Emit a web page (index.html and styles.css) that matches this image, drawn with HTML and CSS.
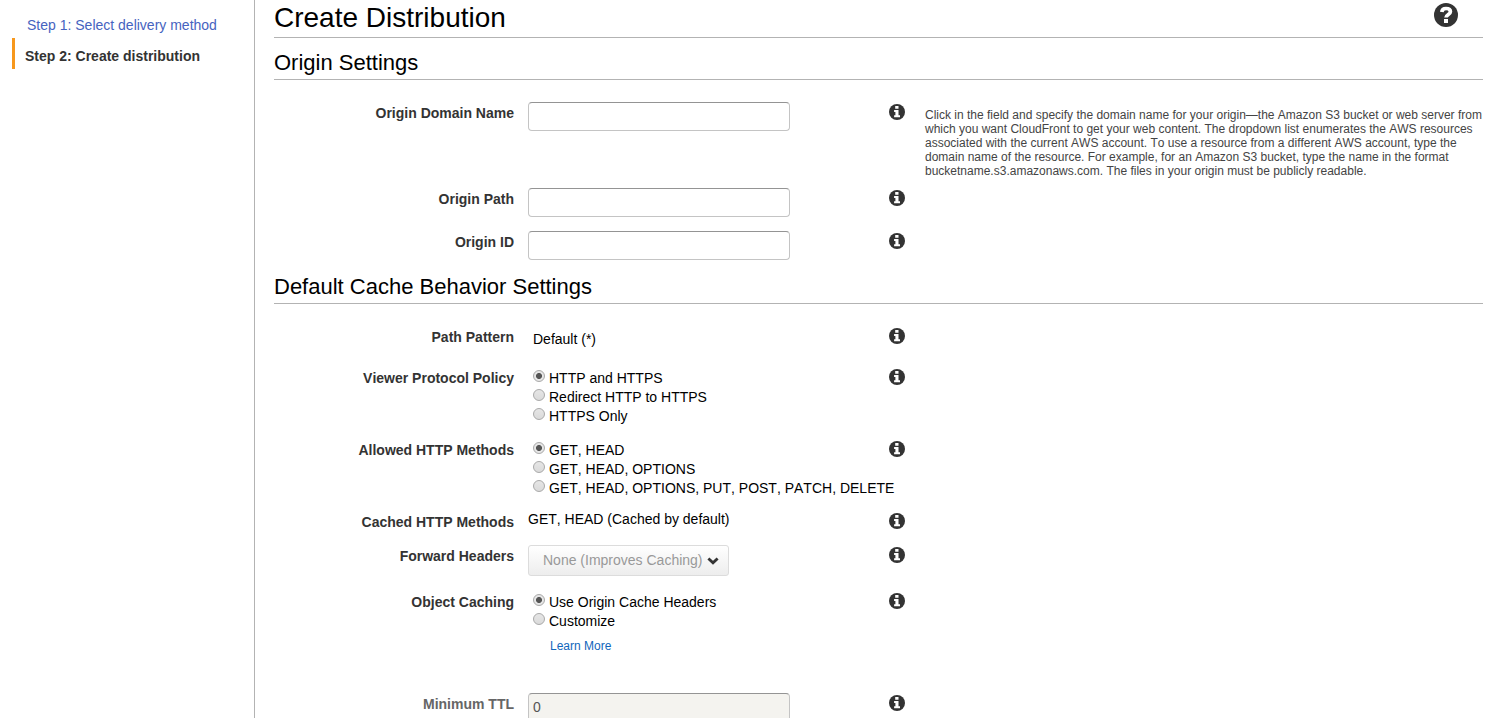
FILE: index.html
```
<!DOCTYPE html>
<html lang="en">
<head>
<meta charset="utf-8">
<title>Create Distribution</title>
<link rel="stylesheet" href="styles.css">
</head>
<body>
<svg class="sprite" aria-hidden="true">
  <symbol id="info" viewBox="0 0 16 16">
    <circle cx="8" cy="8" r="8" fill="#333"/>
    <path fill="#fff" d="M6.200 2h3.300v2.700H6.200zM5.100 6h4.400v5.300H11V13.300H5.100v-2h1.300V8H5.100z"/>
  </symbol>
</svg>
<div class="page">
  <nav class="steps">
    <a class="step" href="#">Step 1: Select delivery method</a>
    <span class="step current">Step 2: Create distribution</span>
  </nav>
  <main class="content">
    <header class="title">
      <h1>Create Distribution</h1>
      <svg class="help-icon" viewBox="0 0 24 24"><circle cx="12" cy="12" r="12" fill="#333"/><path d="M7.800 9C8 6.500 9.600 5.500 12 5.500c2.600 0 4.400 1.100 4.400 3.200 0 2.700-4.400 2.800-4.400 5.900" fill="none" stroke="#fff" stroke-width="3.700"/><path d="M10 16h4v4h-4z" fill="#fff"/></svg>
    </header>

    <h2>Origin Settings</h2>
    <section class="rows origin">
      <div class="row tall">
        <label class="name">Origin Domain Name</label>
        <div class="field"><input class="text" type="text"></div>
        <svg class="info"><use href="#info"/></svg>
        <p class="hint">Click in the field and specify the domain name for your origin—the Amazon S3 bucket or web server from<br>which you want CloudFront to get your web content. The dropdown list enumerates the AWS resources<br>associated with the current AWS account. To use a resource from a different AWS account, type the<br>domain name of the resource. For example, for an Amazon S3 bucket, type the name in the format<br>bucketname.s3.amazonaws.com. The files in your origin must be publicly readable.</p>
      </div>
      <div class="row input-row">
        <label class="name">Origin Path</label>
        <div class="field"><input class="text" type="text"></div>
        <svg class="info"><use href="#info"/></svg>
      </div>
      <div class="row input-row">
        <label class="name">Origin ID</label>
        <div class="field"><input class="text" type="text"></div>
        <svg class="info"><use href="#info"/></svg>
      </div>
    </section>

    <h2>Default Cache Behavior Settings</h2>
    <section class="rows">
      <div class="row pattern">
        <span class="name">Path Pattern</span>
        <div class="field inset">Default (*)</div>
        <svg class="info"><use href="#info"/></svg>
      </div>
      <div class="row choices">
        <span class="name">Viewer Protocol Policy</span>
        <div class="field options">
          <label class="option"><i class="radio on"></i>HTTP and HTTPS</label>
          <label class="option"><i class="radio"></i>Redirect HTTP to HTTPS</label>
          <label class="option"><i class="radio"></i>HTTPS Only</label>
        </div>
        <svg class="info"><use href="#info"/></svg>
      </div>
      <div class="row choices">
        <span class="name">Allowed HTTP Methods</span>
        <div class="field options">
          <label class="option"><i class="radio on"></i>GET, HEAD</label>
          <label class="option"><i class="radio"></i>GET, HEAD, OPTIONS</label>
          <label class="option"><i class="radio"></i>GET, HEAD, OPTIONS, PUT, POST, PATCH, DELETE</label>
        </div>
        <svg class="info"><use href="#info"/></svg>
      </div>
      <div class="row cached">
        <span class="name">Cached HTTP Methods</span>
        <div class="field">GET, HEAD (Cached by default)</div>
        <svg class="info"><use href="#info"/></svg>
      </div>
      <div class="row headers">
        <span class="name">Forward Headers</span>
        <div class="field"><button class="select" disabled>None (Improves Caching)<svg class="chevron" viewBox="0 0 12 8"><path d="M1.400 1.500 6 5.700l4.600-4.200" fill="none" stroke="#333" stroke-width="2.900"/></svg></button></div>
        <svg class="info"><use href="#info"/></svg>
      </div>
      <div class="row caching">
        <span class="name">Object Caching</span>
        <div class="field options">
          <label class="option"><i class="radio on"></i>Use Origin Cache Headers</label>
          <label class="option"><i class="radio"></i>Customize</label>
          <a class="learn" href="#">Learn More</a>
        </div>
        <svg class="info"><use href="#info"/></svg>
      </div>
      <div class="row">
        <label class="name muted">Minimum TTL</label>
        <div class="field"><input class="text" type="text" value="0" disabled></div>
        <svg class="info"><use href="#info"/></svg>
      </div>
    </section>
  </main>
</div>
</body>
</html>
```
FILE: styles.css
```
* { box-sizing: border-box; }
body {
  margin: 0;
  background: #fff;
  color: #000;
  font: 14px/16px "Liberation Sans", Arial, sans-serif;
  font-kerning: none;
}
.sprite { display: none; }
.page { display: flex; height: 718px; overflow: hidden; }

.steps {
  display: flex;
  flex-direction: column;
  width: 255px;
  flex: none;
  padding: 10px 0 0 12px;
  border-right: 1px solid #b3b3b3;
}
.step {
  height: 28px;
  padding-left: 15px;
  line-height: 30px;
  color: #4663c0;
  text-decoration: none;
}
.step.current {
  height: 31px;
  padding-left: 10px;
  border-left: 3px solid #f7981d;
  line-height: 36px;
  font-weight: bold;
  color: #333;
}

.content { flex: 1; padding: 0 6px 0 19px; }
.title {
  display: flex;
  justify-content: space-between;
  height: 38px;
  padding-right: 25px;
  border-bottom: 1px solid #b3b3b3;
}
h1 { margin: 0; font-size: 28px; font-weight: normal; line-height: 35px; }
.help-icon { width: 24px; height: 24px; margin-top: 3px; }
h2 {
  height: 42px;
  margin: 0;
  padding-top: 12px;
  border-bottom: 1px solid #b3b3b3;
  font-size: 22px;
  font-weight: normal;
  line-height: 26px;
}
.rows { padding-top: 22px; }
.origin { height: 182px; }
.row {
  display: grid;
  grid-template-columns: 240px 375px 16px 558px;
  align-items: start;
}
.name { padding-top: 3px; text-align: right; font-weight: bold; color: #333; }
.name.muted { color: #666; }
.field { padding-left: 14px; white-space: nowrap; }
.info { width: 16px; height: 16px; margin-top: 2px; }
.hint {
  margin: 6px 0 0 20px;
  font-size: 12px;
  line-height: 14px;
  color: #444;
  white-space: nowrap;
}
.tall { height: 86px; }
.input-row { height: 43px; }
.pattern { height: 41px; }
.choices { height: 72px; }
.cached { height: 34px; }
.headers { height: 46px; }
.caching { height: 102px; }

.text {
  display: block;
  width: 262px;
  height: 29px;
  padding: 0 4px 1px;
  border: 1px solid #c4c4c4;
  border-top-color: #949494;
  border-radius: 4px;
  background: #fff;
  font: inherit;
}
.text:disabled { background: #f4f3ef; color: #555; }
.inset { padding: 5px 0 0 19px; }
.options { display: flex; flex-direction: column; padding: 1px 0 0 19px; }
.option { display: flex; gap: 4px; height: 19px; line-height: 20px; }
.radio {
  width: 12px;
  height: 12px;
  flex: none;
  margin-top: 2px;
  border: 1px solid #a9a9a9;
  border-radius: 50%;
  background: linear-gradient(#e6e6e6, #dadada);
}
.radio.on { background: radial-gradient(circle, #555 2.600px, #e6e6e6 3.400px); }
.learn {
  padding: 9px 0 0 17px;
  font-size: 12px;
  line-height: 14px;
  color: #1166bb;
  text-decoration: none;
}
.select {
  display: flex;
  align-items: center;
  gap: 4px;
  width: 201px;
  height: 31px;
  padding: 0 0 2px 14px;
  border: 1px solid #dcdcdc;
  border-radius: 3px;
  background: linear-gradient(#fff, #ededed);
  color: #999;
  font: inherit;
  font-kerning: none;
}
.chevron { width: 12px; height: 8px; margin-top: 3px; }
```
